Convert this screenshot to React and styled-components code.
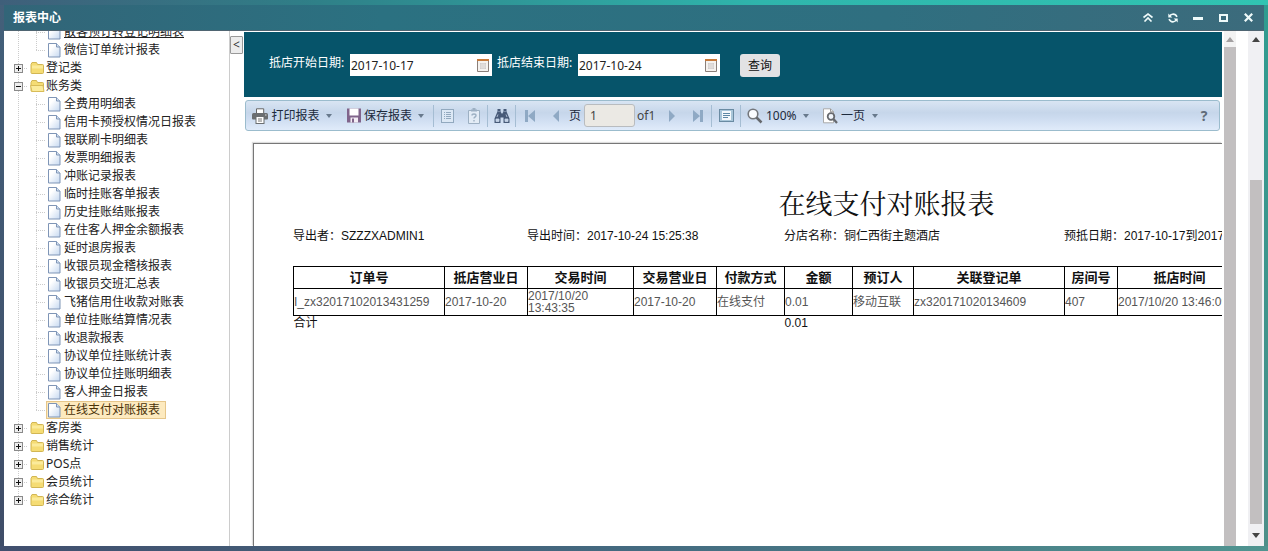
import React from 'react';
import styled, { createGlobalStyle, css } from 'styled-components';

const GlobalStyle = createGlobalStyle`
  * { box-sizing: border-box; }
  body { margin: 0; overflow: hidden; }
  button, input, select { font: inherit; color: inherit; margin: 0; padding: 0; border: 0; background: none; }
  ul { list-style: none; margin: 0; padding: 0; }
`;

const uiFont = '"Noto Sans", "Noto Sans CJK SC", sans-serif';
const reportFont = '"Liberation Sans", "Noto Sans CJK SC", sans-serif';

const Window = styled.div`
  display: flex;
  flex-direction: column;
  height: 100vh;
  padding: 5px 4px;
  background:
    linear-gradient(90deg, #3f5f7a, #2f8088 25%, #2fb5ac 60%, #31c4b2) top / 100% 5px no-repeat,
    linear-gradient(90deg, #414f6e, #446a80 50%, #4f9490) bottom / 100% 5px no-repeat,
    linear-gradient(#43607a, #3f4d68) left / 50% 100% no-repeat,
    linear-gradient(#2f9c90, #4d8f89) right / 50% 100% no-repeat;
  font: 12px/18px ${uiFont};
  color: #222;
`;

const TitleBar = styled.header`
  display: flex;
  align-items: center;
  justify-content: space-between;
  flex: 0 0 26px;
  padding: 0 8px 0 9px;
  background: linear-gradient(90deg, #326578, #2b7181 30%, #2f6f80 70%, #3c6b7c);
  border-bottom: 1px solid #4f6572;
`;

const Title = styled.h1`
  margin: 0;
  font-size: 12px;
  line-height: 18px;
  color: #fff;
`;

const WindowControls = styled.div`
  display: flex;
  gap: 9px;
`;

const WindowButton = styled.button`
  display: flex;
  align-items: center;
  justify-content: center;
  width: 16px;
  height: 16px;
  color: #eefafa;
`;

const Body = styled.div`
  display: flex;
  flex: 1;
  min-height: 0;
  background: #fff;
`;

const Sidebar = styled.nav`
  flex: 0 0 226px;
  overflow: hidden;
  border-right: 1px solid #ccc;
`;

const Tree = styled.ul`
  && { margin-top: -8px; padding-left: 5px; }
`;

const TreeRow = styled.li`
  display: flex;
  align-items: center;
  height: 18px;
`;

const dotsDown = 'repeating-linear-gradient(#ccc 0 1px, transparent 1px 2px)';
const dotsAcross = 'repeating-linear-gradient(90deg, #ccc 0 1px, transparent 1px 2px)';

const Guide = styled.span`
  display: flex;
  align-items: center;
  justify-content: center;
  flex: 0 0 18px;
  height: 18px;
  background:
    ${dotsDown} 9px 0 / 1px ${(p) => (p.$last ? '9px' : '18px')} no-repeat
    ${(p) => p.$branch && css`, ${dotsAcross} 9px 9px / 9px 1px no-repeat`};
`;

const Toggle = styled.button`
  display: flex;
  width: 9px;
  height: 9px;
`;

const Node = styled.a`
  display: flex;
  align-items: center;
  gap: ${(p) => (p.$folder ? '1px' : '3px')};
  height: 18px;
  margin-left: 1px;
  padding: 0 5px 0 1px;
  border: 1px solid ${(p) => (p.$selected ? '#e6c68a' : 'transparent')};
  background: ${(p) => (p.$selected ? '#fdeabf' : 'none')};
  color: ${(p) => (p.$selected ? '#4a3208' : '#222')};
  text-decoration: ${(p) => (p.$hovered ? 'underline' : 'none')};
  line-height: 16px;
  white-space: nowrap;
`;

const Splitter = styled.div`
  flex: 0 0 14px;
  padding: 5px 1px 0 0;
`;

const CollapseButton = styled.button`
  && {
    width: 13px;
    height: 18px;
    border: 1px solid #999;
    border-radius: 1px;
    background: #ececec;
    line-height: 16px;
    color: #333;
  }
`;

const Main = styled.main`
  display: flex;
  flex-direction: column;
  flex: 1;
  min-width: 0;
  padding-top: 1px;
`;

const QueryForm = styled.form`
  display: flex;
  align-items: flex-start;
  flex: 0 0 65px;
  padding: 22px 25px 0;
  background: #06546a;
  color: #fff;
`;

const FieldLabel = styled.label`
  width: 81px;
  line-height: 18px;
  white-space: nowrap;
`;

const DateBox = styled.div`
  display: flex;
  align-items: center;
  width: 142px;
  height: 22px;
  margin-right: 5px;
  padding: 0 3px 0 1px;
  background: #fff;
  color: #222;
`;

const DateInput = styled.input`
  flex: 1;
  min-width: 0;
  height: 20px;
  outline: none;
`;

const CalendarButton = styled.button`
  display: flex;
`;

const QueryButton = styled.button`
  && {
    width: 40px;
    height: 23px;
    margin-left: 15px;
    border-radius: 3px;
    background: #e2e2e4;
    color: #111;
  }
`;

const Toolbar = styled.div`
  display: flex;
  align-items: center;
  flex: 0 0 31px;
  margin: 3px 2px 0 1px;
  border: 1px solid #9bbccd;
  border-radius: 3px;
  background: linear-gradient(#d9e5f3, #c6d6ea 40%, #cddcf0 60%, #e0ebfa);
  color: #1c2a3c;
`;

const ToolButton = styled.button`
  display: flex;
  align-items: center;
  justify-content: center;
  gap: 3px;
  flex: 0 0 ${(p) => p.$width}px;
  height: 28px;
  white-space: nowrap;
`;

const ToolPicker = styled.label`
  display: flex;
  align-items: center;
  justify-content: center;
  gap: 3px;
  flex: 0 0 ${(p) => p.$width}px;
`;

const PickerSelect = styled.select`
  appearance: none;
  width: ${(p) => p.$width}px;
  outline: none;
`;

const Divider = styled.span`
  flex: 0 0 1px;
  height: 22px;
  background: #a5bdd3;
`;

const PageLabel = styled.label`
  flex: 0 0 15px;
`;

const PageInput = styled.input`
  && {
    flex: 0 0 51px;
    width: 51px;
    height: 23px;
    padding-left: 5px;
    border: 1px solid #b9bcbf;
    border-radius: 3px;
    background: #ebe9e4;
    color: #444;
  }
`;

const PageCount = styled.span`
  flex: 0 0 23px;
  padding-left: 2px;
  white-space: nowrap;
  color: #444;
`;

const HelpButton = styled(ToolButton)`
  && {
    margin-left: auto;
    font-size: 14px;
    font-weight: bold;
    color: #5f6b78;
  }
`;

const ReportViewport = styled.section`
  flex: 1;
  min-height: 0;
  margin: 12px 0 0 9px;
  overflow: hidden;
  border-top: 1px solid #777;
  border-left: 1px solid #777;
  box-shadow: -1px -1px 1px #ddd;
  background: #fff;
`;

const Sheet = styled.article`
  width: 1265px;
  padding: 40px 39px;
  font-family: ${reportFont};
  color: #111;
`;

const ReportTitle = styled.h2`
  margin: 0;
  text-align: center;
  font: 400 27px/42px "Liberation Serif", "Noto Serif CJK SC", "Noto Sans CJK SC", serif;
`;

const ReportMeta = styled.div`
  display: grid;
  grid-template-columns: 234px 257px 280px 1fr;
  line-height: 20px;
`;

const ReportTable = styled.table`
  width: 948px;
  margin-top: 20px;
  table-layout: fixed;
  border-collapse: collapse;
`;

const HeadCell = styled.th`
  height: 22px;
  padding: 0;
  border: 1px solid #000;
  font-size: 13px;
  line-height: 20px;
`;

const DataCell = styled.td`
  height: 27px;
  padding: 0;
  border: 1px solid #000;
  line-height: 12px;
  color: #555;
  white-space: ${(p) => (p.$wrap ? 'normal' : 'nowrap')};
`;

const TotalCell = styled.td`
  padding: 0;
  line-height: 14px;
`;

const ScrollTrack = styled.div`
  display: flex;
  flex-direction: column;
  align-items: center;
  flex: 0 0 ${(p) => p.$width}px;
  margin-left: ${(p) => p.$gap}px;
  background: ${(p) => p.$track};
`;

const ScrollArrow = styled.button`
  display: flex;
  align-items: center;
  justify-content: center;
  width: 100%;
  flex: 0 0 ${(p) => p.$height}px;
`;

const ScrollThumb = styled.div`
  flex: 1;
  width: 12px;
  margin-top: ${(p) => p.$offset}px;
  background: #c2bfc0;
`;

const Caret = () => (
  <svg width="6" height="4" viewBox="0 0 6 4"><path d="M0 0h6L3 4z" fill="#68798c" /></svg>
);

const MenuCaret = styled.span`
  display: flex;
  margin-left: 3px;
`;

const ToggleIcon = ({ open }) => (
  <svg width="9" height="9" viewBox="0 0 9 9">
    <rect x=".5" y=".5" width="8" height="8" fill="#eee" stroke="#8a8a8a" />
    <path d={open ? 'M2 4.5h5' : 'M2 4.5h5M4.5 2v5'} stroke="#111" />
  </svg>
);

const FolderIcon = ({ open }) => (
  <svg width="15" height="14" viewBox="0 0 15 14">
    <path d="M1 3.5 2 1.5h4.500l1 2h5q1 0 1 1v7q0 1-1 1h-10.500q-1 0-1-1z" fill="#f5dc74" stroke="#d2b653" />
    {open
      ? <path d="M.5 6.500h12.500l1 6h-12z" fill="#fbeb9b" stroke="#d8bc58" />
      : <path d="M2 4.500h11v3h-11z" fill="#fbeb9b" />}
  </svg>
);

const FileIcon = () => (
  <svg width="13" height="15" viewBox="0 0 13 15">
    <defs>
      <linearGradient id="sheet" x1="0" y1="0" x2="1" y2="1">
        <stop offset=".3" stopColor="#fff" />
        <stop offset="1" stopColor="#c5d8f0" />
      </linearGradient>
    </defs>
    <path d="M.5.5h8l3.500 3.500v10h-11.500z" fill="url(#sheet)" stroke="#7f95b6" />
    <path d="M8.500.5v3.500h3.500" fill="#d4e1f2" stroke="#7f95b6" />
  </svg>
);

const CalendarIcon = () => (
  <svg width="12" height="13" viewBox="0 0 12 13">
    <path d="M.5 1v11.500h11V1" fill="#f5f2ef" stroke="#8a7f7a" />
    <path d="M0 1h12" stroke="#c67a3c" strokeWidth="2" />
    <rect x="3" y="4" width="6" height="6" fill="#d0cccc" />
    <path d="M3 6h6M3 8h6M5 4v6M7 4v6" stroke="#f5f2ef" strokeWidth=".5" />
  </svg>
);

const PrinterIcon = () => (
  <svg width="16" height="16" viewBox="0 0 16 16">
    <path d="M4.500 5V.8h7.200V5" fill="#fff" stroke="#666" />
    <path d="M1.500 5h13q1.500 0 1.500 1.500v4q0 1-1 1H1q-1 0-1-1v-4Q0 5 1.500 5z" fill="#6b6e71" />
    <rect x="4" y="8.500" width="8" height="7" fill="#fff" stroke="#6b6e71" />
    <path d="M6 11h4M6 13h4" stroke="#777" />
    <rect x="13" y="6.500" width="1.500" height="1" fill="#ddd" />
  </svg>
);

const SaveIcon = () => (
  <svg width="14" height="15" viewBox="0 0 14 15">
    <path d="M0 .5h14v14H0z" fill="#80648b" />
    <path d="M2.500.5h9v7h-9z" fill="#fff" />
    <path d="M3.500 9.500h7.500v5H3.500z" fill="#f3edf5" />
    <path d="M5 10.500h2v4H5z" fill="#80648b" />
  </svg>
);

const OutlineIcon = () => (
  <svg width="13" height="14" viewBox="0 0 13 14" fill="none" stroke="#92a9bf">
    <rect x=".5" y=".5" width="12" height="13" fill="#dce8f5" />
    <path d="M3 3.500h1M5 3.500h5M3 5.500h1M5 5.500h5M3 7.500h1M5 7.500h5M3 9.500h1M5 9.500h5" />
  </svg>
);

const ParametersIcon = () => (
  <svg width="12" height="16" viewBox="0 0 12 16" fill="none" stroke="#9db0c3">
    <path d="M.5 2.500h11v13H.5z" fill="#e3ecf6" />
    <path d="M3 2.500h6M4.500 1h3" strokeWidth="2" />
    <path d="M4 7.500q0-1.500 2-1.500t2 1.500q0 1-1 1.500t-1 1.500M6 12v1.500" strokeWidth="1.400" />
  </svg>
);

const BinocularsIcon = () => (
  <svg width="16" height="14" viewBox="0 0 16 14">
    <path d="M3.500 0h3v2.500l1 2h1l1-2V0h3v2.500l3 7V14H9.500V8.500h-3V14H.5V9.500l3-7z" fill="#475a78" />
    <path d="M4.500 2.500h1M10.500 2.500h1M2 10h3v2.500H2zM11 10h3v2.500h-3zM4 5.500 3 8M12 5.500 13 8" stroke="#c4d2e6" fill="#c4d2e6" strokeWidth=".8" />
  </svg>
);

const FirstIcon = () => <svg width="10" height="12" viewBox="0 0 10 12"><path d="M0 0h3v12H0zM10 0v12L3 6z" fill="#8fa9c4" /></svg>;
const PrevIcon = () => <svg width="6" height="12" viewBox="0 0 6 12"><path d="M6 0v12L0 6z" fill="#8fa9c4" /></svg>;
const NextIcon = () => <svg width="6" height="12" viewBox="0 0 6 12"><path d="M0 0v12l6-6z" fill="#8fa9c4" /></svg>;
const LastIcon = () => <svg width="10" height="12" viewBox="0 0 10 12"><path d="M7 0h3v12H7zM0 0v12l7-6z" fill="#8fa9c4" /></svg>;

const FullScreenIcon = () => (
  <svg width="15" height="13" viewBox="0 0 15 13">
    <rect x=".5" y=".5" width="14" height="12" fill="#a9c6d9" stroke="#6a8ba3" />
    <rect x="3" y="2" width="9" height="9" fill="#f4f9fc" />
    <path d="M4 4.500h7M4 6.500h7M4 8.500h5" stroke="#5d88a5" />
  </svg>
);

const MagnifierIcon = () => (
  <svg width="16" height="16" viewBox="0 0 16 16" fill="none">
    <circle cx="6" cy="6" r="4.800" fill="#fafcff" stroke="#74777c" strokeWidth="1.600" />
    <path d="m9.500 9.500 5 5" stroke="#66696e" strokeWidth="2.500" />
  </svg>
);

const PreviewIcon = () => (
  <svg width="16" height="16" viewBox="0 0 16 16" fill="none">
    <path d="M1.500.8h7l3 3v11h-10z" fill="#fff" stroke="#aaa" />
    <path d="M8.500.8v3h3" stroke="#999" />
    <circle cx="9" cy="8.500" r="3.300" fill="#f0f5fb" stroke="#66696e" strokeWidth="1.800" />
    <path d="m11.500 11 3.500 4" stroke="#66696e" strokeWidth="2.200" />
  </svg>
);

const tree = [
  { label: '散客预订转登记明细表', hovered: true },
  { label: '微信订单统计报表', last: true },
  { label: '登记类', folder: true },
  { label: '账务类', folder: true, open: true },
  { label: '全费用明细表' },
  { label: '信用卡预授权情况日报表' },
  { label: '银联刷卡明细表' },
  { label: '发票明细报表' },
  { label: '冲账记录报表' },
  { label: '临时挂账客单报表' },
  { label: '历史挂账结账报表' },
  { label: '在住客人押金余额报表' },
  { label: '延时退房报表' },
  { label: '收银员现金稽核报表' },
  { label: '收银员交班汇总表' },
  { label: '飞猪信用住收款对账表' },
  { label: '单位挂账结算情况表' },
  { label: '收退款报表' },
  { label: '协议单位挂账统计表' },
  { label: '协议单位挂账明细表' },
  { label: '客人押金日报表' },
  { label: '在线支付对账报表', selected: true, last: true },
  { label: '客房类', folder: true },
  { label: '销售统计', folder: true },
  { label: 'POS点', folder: true },
  { label: '会员统计', folder: true },
  { label: '综合统计', folder: true, last: true },
];

const columns = [
  { title: '订单号', width: 151, value: 'I_zx32017102013431259' },
  { title: '抵店营业日', width: 83, value: '2017-10-20' },
  { title: '交易时间', width: 106, value: <>2017/10/20<br />13:43:35</>, wrap: true },
  { title: '交易营业日', width: 83, value: '2017-10-20' },
  { title: '付款方式', width: 68, value: '在线支付' },
  { title: '金额', width: 68, value: '0.01' },
  { title: '预订人', width: 61, value: '移动互联' },
  { title: '关联登记单', width: 151, value: 'zx320171020134609' },
  { title: '房间号', width: 53, value: '407' },
  { title: '抵店时间', width: 124, value: '2017/10/20 13:46:09' },
];

function TreeItem({ item }) {
  return (
    <TreeRow>
      <Guide $last={item.folder && item.last} $branch={item.folder}>
        {item.folder && (
          <Toggle type="button" aria-label={item.label}><ToggleIcon open={item.open} /></Toggle>
        )}
      </Guide>
      {!item.folder && <Guide $branch $last={item.last} />}
      <Node href="#" $folder={item.folder} $selected={item.selected} $hovered={item.hovered}>
        {item.folder ? <FolderIcon open={item.open} /> : <FileIcon />}
        {item.label}
      </Node>
    </TreeRow>
  );
}

function DateField({ id, label, value }) {
  return (
    <>
      <FieldLabel htmlFor={id}>{label}</FieldLabel>
      <DateBox>
        <DateInput id={id} defaultValue={value} />
        <CalendarButton type="button" aria-label="选择日期"><CalendarIcon /></CalendarButton>
      </DateBox>
    </>
  );
}

function ReportToolbar() {
  return (
    <Toolbar role="toolbar">
      <ToolButton type="button" $width={92}><PrinterIcon />打印报表<MenuCaret><Caret /></MenuCaret></ToolButton>
      <ToolButton type="button" $width={95}><SaveIcon />保存报表<MenuCaret><Caret /></MenuCaret></ToolButton>
      <Divider />
      <ToolButton type="button" $width={27} aria-label="书签"><OutlineIcon /></ToolButton>
      <ToolButton type="button" $width={26} aria-label="参数"><ParametersIcon /></ToolButton>
      <Divider />
      <ToolButton type="button" $width={27} aria-label="查找"><BinocularsIcon /></ToolButton>
      <Divider />
      <ToolButton type="button" $width={27} aria-label="首页"><FirstIcon /></ToolButton>
      <ToolButton type="button" $width={26} aria-label="上一页"><PrevIcon /></ToolButton>
      <PageLabel htmlFor="page">页</PageLabel>
      <PageInput id="page" defaultValue="1" />
      <PageCount>of1</PageCount>
      <ToolButton type="button" $width={27} aria-label="下一页"><NextIcon /></ToolButton>
      <ToolButton type="button" $width={26} aria-label="末页"><LastIcon /></ToolButton>
      <Divider />
      <ToolButton type="button" $width={28} aria-label="全屏"><FullScreenIcon /></ToolButton>
      <Divider />
      <ToolPicker $width={74}>
        <MagnifierIcon />
        <PickerSelect $width={34} aria-label="缩放"><option>100%</option></PickerSelect>
        <Caret />
      </ToolPicker>
      <ToolPicker $width={70}>
        <PreviewIcon />
        <PickerSelect $width={28} aria-label="视图"><option>一页</option></PickerSelect>
        <Caret />
      </ToolPicker>
      <HelpButton type="button" $width={30}>?</HelpButton>
    </Toolbar>
  );
}

function Report() {
  return (
    <Sheet>
      <ReportTitle>在线支付对账报表</ReportTitle>
      <ReportMeta>
        <span>导出者：SZZZXADMIN1</span>
        <span>导出时间：2017-10-24 15:25:38</span>
        <span>分店名称：铜仁西街主题酒店</span>
        <span>预抵日期：2017-10-17到2017-10-24</span>
      </ReportMeta>
      <ReportTable>
        <colgroup>{columns.map((c) => <col key={c.title} width={c.width} />)}</colgroup>
        <thead>
          <tr>{columns.map((c) => <HeadCell key={c.title}>{c.title}</HeadCell>)}</tr>
        </thead>
        <tbody>
          <tr>{columns.map((c) => <DataCell key={c.title} $wrap={c.wrap}>{c.value}</DataCell>)}</tr>
        </tbody>
        <tfoot>
          <tr>
            <TotalCell colSpan={5}>合计</TotalCell>
            <TotalCell colSpan={5}>0.01</TotalCell>
          </tr>
        </tfoot>
      </ReportTable>
    </Sheet>
  );
}

const Arrow = ({ down, color }) => (
  <svg width="8" height="5" viewBox="0 0 8 5"><path d={down ? 'M0 0h8L4 5z' : 'M0 5h8L4 0z'} fill={color} /></svg>
);

export default function App() {
  return (
    <Window>
      <GlobalStyle />
      <TitleBar>
        <Title>报表中心</Title>
        <WindowControls>
          <WindowButton type="button" aria-label="收起">
            <svg width="10" height="9" viewBox="0 0 10 9" fill="none" stroke="currentColor" strokeWidth="1.600"><path d="m.5 4.500 4.500-3.500 4.500 3.500M1.500 8.500l3.500-3.500 3.500 3.500" /></svg>
          </WindowButton>
          <WindowButton type="button" aria-label="刷新">
            <svg width="10" height="10" viewBox="0 0 10 10" fill="none" stroke="currentColor" strokeWidth="1.600"><path d="M9 3.800Q7.500.8 4.500 1.200 2.500 1.500 1.500 3.500M1 6.200q1.500 3 4.500 2.600 2-.3 3-2.300" /><path d="M.3.500v4h4zM9.700 9.500v-4h-4z" fill="currentColor" stroke="none" /></svg>
          </WindowButton>
          <WindowButton type="button" aria-label="最小化">
            <svg width="10" height="10" viewBox="0 0 10 10"><path d="M0 4h10v3H0z" fill="currentColor" /></svg>
          </WindowButton>
          <WindowButton type="button" aria-label="最大化">
            <svg width="9" height="8" viewBox="0 0 9 8" fill="none" stroke="currentColor" strokeWidth="2"><path d="M1 1h7v6H1z" /></svg>
          </WindowButton>
          <WindowButton type="button" aria-label="关闭">
            <svg width="9" height="9" viewBox="0 0 9 9" stroke="currentColor" strokeWidth="2.200"><path d="m.8.800 7.400 7.400M8.200.800.8 8.200" /></svg>
          </WindowButton>
        </WindowControls>
      </TitleBar>
      <Body>
        <Sidebar>
          <Tree>{tree.map((item) => <TreeItem key={item.label} item={item} />)}</Tree>
        </Sidebar>
        <Splitter><CollapseButton type="button">&lt;</CollapseButton></Splitter>
        <Main>
          <QueryForm>
            <DateField id="from" label="抵店开始日期:" value="2017-10-17" />
            <DateField id="to" label="抵店结束日期:" value="2017-10-24" />
            <QueryButton type="button">查询</QueryButton>
          </QueryForm>
          <ReportToolbar />
          <ReportViewport><Report /></ReportViewport>
        </Main>
        <ScrollTrack $width={12} $gap={2} $track="#f3f3f3">
          <ScrollArrow type="button" $height={16} aria-label="向上滚动"><Arrow color="#a3a0a1" /></ScrollArrow>
          <ScrollThumb $offset={0} />
        </ScrollTrack>
        <ScrollTrack $width={16} $gap={12} $track="#f0f0f3">
          <ScrollArrow type="button" $height={16} aria-label="向上滚动"><Arrow color="#444" /></ScrollArrow>
          <ScrollThumb $offset={133} />
          <ScrollArrow type="button" $height={22} aria-label="向下滚动"><Arrow down color="#444" /></ScrollArrow>
        </ScrollTrack>
      </Body>
    </Window>
  );
}
